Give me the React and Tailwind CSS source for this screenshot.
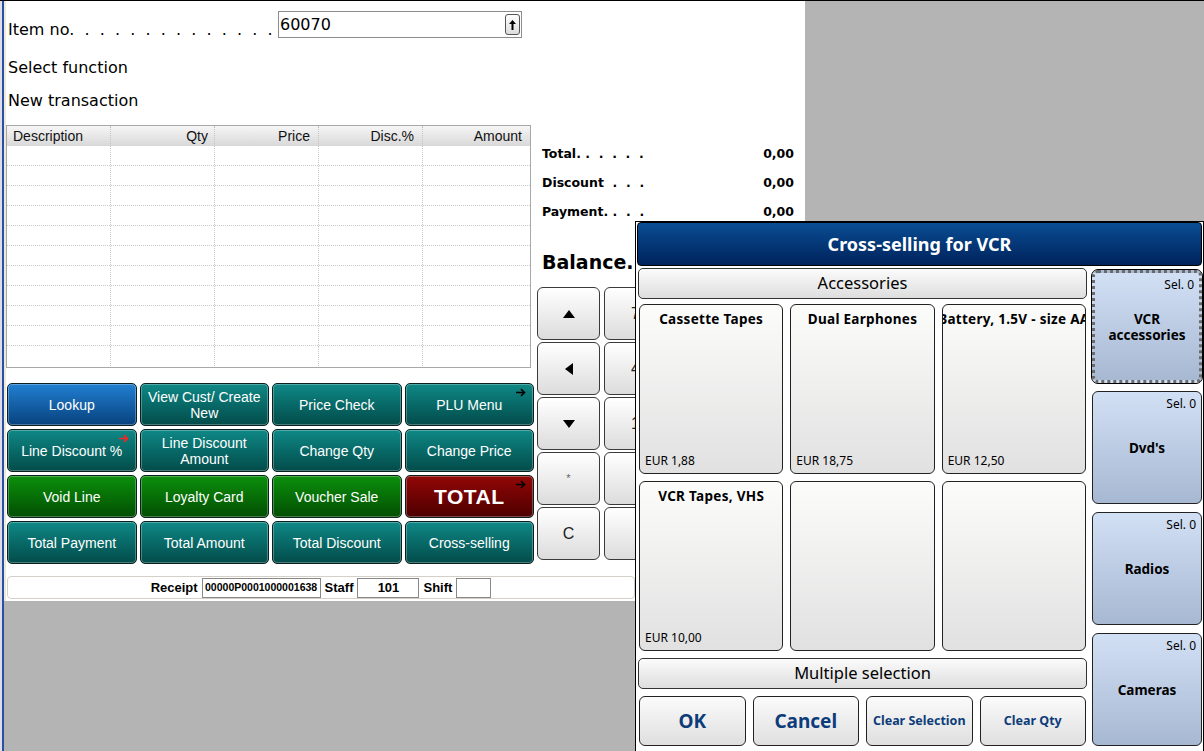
import React from "react";

const uiFont = { fontFamily: '"DejaVu Sans", Verdana, sans-serif' };
const arial = { fontFamily: '"Liberation Sans", Arial, sans-serif' };
const tahoma = { fontFamily: '"Noto Sans", Tahoma, sans-serif' };

const Arrow = ({ className }) => (
  <svg width="11" height="9" viewBox="0 0 11 9" className={className}>
    <path d="M0 4.5h8M5 1.2l3.5 3.3L5 7.8" stroke="currentColor" strokeWidth="1.6" fill="none" />
  </svg>
);

const fnColors = {
  blue: "from-[#2280d2] to-[#08427f]",
  teal: "from-[#0f8987] to-[#034c4a]",
  green: "from-[#0c900c] to-[#034f03]",
  red: "from-[#930808] to-[#4e0000]",
};

const FnButton = ({ label, color = "teal", arrow, big }) => (
  <div
    className={`relative flex items-center justify-center rounded-[5px] border border-[#0b1f1f] bg-linear-to-b ${fnColors[color]} px-1 text-center leading-[16px] text-white shadow-[inset_0_0_0_1px_rgba(255,255,255,0.28)]`}
    style={arial}
  >
    <span className={big ? "text-[21px] font-bold tracking-[0.5px]" : "text-[14px]"}>{label}</span>
    {arrow && (
      <Arrow className={`absolute top-[4px] right-[6px] ${arrow === "red" ? "text-[#ff2020]" : "text-black"}`} />
    )}
  </div>
);

const KeyButton = ({ children }) => (
  <div className="flex items-center justify-center rounded-[6px] border border-[#3a3a3a] bg-linear-to-b from-white to-[#dcdcdc] text-[16px] text-[#222]" style={arial}>
    {children}
  </div>
);

const Tri = ({ dir }) => {
  const d = {
    up: "M0 8L6 0l6 8z",
    down: "M0 0h12L6 8z",
    left: "M8 0v12L0 6z",
  }[dir];
  const w = dir === "left" ? 8 : 12;
  const h = dir === "left" ? 12 : 8;
  return (
    <svg width={w} height={h} viewBox={`0 0 ${w} ${h}`}>
      <path d={d} fill="#000" />
    </svg>
  );
};

const columns = [
  { label: "Description", align: "text-left pl-[6px]" },
  { label: "Qty", align: "text-right pr-[6px]" },
  { label: "Price", align: "text-right pr-[8px]" },
  { label: "Disc.%", align: "text-right pr-[8px]" },
  { label: "Amount", align: "text-right pr-[8px]" },
];

const fnButtons = [
  { label: "Lookup", color: "blue" },
  { label: "View Cust/ Create New" },
  { label: "Price Check" },
  { label: "PLU Menu", arrow: "black" },
  { label: "Line Discount %", arrow: "red" },
  { label: "Line Discount Amount" },
  { label: "Change Qty" },
  { label: "Change Price" },
  { label: "Void Line", color: "green" },
  { label: "Loyalty Card", color: "green" },
  { label: "Voucher Sale", color: "green" },
  { label: "TOTAL", color: "red", arrow: "black", big: true },
  { label: "Total Payment" },
  { label: "Total Amount" },
  { label: "Total Discount" },
  { label: "Cross-selling" },
];

// keypad; the right columns sit under the cross-selling dialog
const keys = [
  <Tri dir="up" />, "7", "", "",
  <Tri dir="left" />, "4", "", "",
  <Tri dir="down" />, "1", "", "",
  <span className="text-[11px] text-[#666]">*</span>, "", "", "",
  "C", "", "", "",
];

const products = [
  { name: "Cassette Tapes", price: "EUR 1,88" },
  { name: "Dual Earphones", price: "EUR 18,75" },
  { name: "Battery, 1.5V - size AA", price: "EUR 12,50" },
  { name: "VCR Tapes, VHS", price: "EUR 10,00" },
  { name: "", price: "" },
  { name: "", price: "" },
];

const categories = [
  { label: ["VCR", "accessories"], selected: true },
  { label: ["Dvd's"] },
  { label: ["Radios"] },
  { label: ["Cameras"] },
];

const TotalRow = ({ label, value }) => (
  <div className="flex h-[29px] items-center justify-between text-[12.5px] font-bold text-black" style={uiFont}>
    <span className="whitespace-pre">{label}</span>
    <span>{value}</span>
  </div>
);

const CrossSellDialog = () => (
  <div className="absolute top-[220px] left-[635px] flex h-[531px] w-[569px] flex-col border border-black bg-white" style={tahoma}>
    <div className="mx-[1px] flex h-[44px] items-center justify-center rounded-[4px] border border-black bg-linear-to-b from-[#0b4d94] to-[#01235c] text-[18px] font-bold text-white">
      Cross-selling for VCR
    </div>
    <div className="flex gap-[5px] pl-[2px]">
      <div className="flex w-[449px] flex-col">
        <div className="mt-[2px] flex h-[31px] items-center justify-center rounded-[5px] border border-[#333] bg-linear-to-b from-[#fbfbfb] to-[#dedede] text-[16.5px] text-black">
          Accessories
        </div>
        <div className="mt-[5px] grid grid-cols-3 grid-rows-[170px_170px] gap-[7px] px-[1px]">
          {products.map((p, i) => (
            <div
              key={i}
              className="flex flex-col justify-between overflow-hidden rounded-[6px] border border-[#222] bg-linear-to-b from-[#fcfcfb] to-[#e1e1e1] pt-[4px] pb-[3px] text-black"
            >
              <div className="flex h-[20px] justify-center whitespace-nowrap text-[13.5px] font-bold tracking-[0.3px]">
                {p.name}
              </div>
              <div className="pl-[5px] text-[12px]">{p.price}</div>
            </div>
          ))}
        </div>
        <div className="mt-[7px] flex h-[31px] items-center justify-center rounded-[5px] border border-[#333] bg-linear-to-b from-[#fbfbfb] to-[#dedede] text-[16.5px] text-black">
          Multiple selection
        </div>
        <div className="mt-[7px] grid h-[50px] grid-cols-4 gap-[7px] px-[1px]">
          {[
            { t: "OK", s: "text-[19px]" },
            { t: "Cancel", s: "text-[19px]" },
            { t: "Clear Selection", s: "text-[12.5px]" },
            { t: "Clear Qty", s: "text-[12.5px]" },
          ].map((b) => (
            <div
              key={b.t}
              className={`flex items-center justify-center whitespace-nowrap rounded-[6px] border border-[#222] bg-linear-to-b from-[#fbfbfb] to-[#dfdfdf] font-bold text-[#0d3c7a] ${b.s}`}
            >
              {b.t}
            </div>
          ))}
        </div>
      </div>
      <div className="mt-[4px] flex w-[110px] flex-col gap-[8px]">
        {categories.map((c, i) => (
          <div
            key={i}
            className={`relative flex h-[113px] flex-col items-center justify-center rounded-[6px] bg-linear-to-b from-[#d2e0f5] to-[#a7b8d2] text-[13.5px] font-bold leading-[16px] text-black ${
              c.selected ? "border-[3px] border-dotted border-[#6a6a6a] outline outline-1 outline-black" : "border border-[#222]"
            }`}
          >
            <span className="absolute top-[4px] right-[5px] text-[12px] font-normal">Sel. 0</span>
            {c.label.map((l) => (
              <span key={l}>{l}</span>
            ))}
          </div>
        ))}
      </div>
    </div>
  </div>
);

export default function App() {
  return (
    <div className="relative flex h-[751px] w-[1204px] overflow-hidden border-t border-black bg-[#b4b4b4]">
      <div className="w-[2px] bg-[#dcdde8]" />
      <div className="w-[2px] bg-[#2b4fa3]" />
      <div className="flex h-[600px] w-[801px] flex-col border-l-[2px] border-[#ece9d8] bg-white">
        {/* header */}
        <div className="h-[124px] pl-[2px] text-[16px] text-black" style={uiFont}>
          <div className="mt-[10px] flex h-[27px] items-center">
            <span className="w-[270px] overflow-hidden whitespace-pre pt-[10px]">Item no.  .  .  .  .  .  .  .  .  .  .  .  .  .</span>
            <div className="flex h-[27px] w-[244px] items-center justify-between border border-[#8c8c8c] pr-[1px] pl-[1px]">
              <span className="text-[16px]">60070</span>
              <div className="flex h-[21px] w-[15px] items-center justify-center rounded-[3px] border border-[#555] bg-linear-to-b from-white to-[#ddd]">
                <svg width="7" height="10" viewBox="0 0 7 10">
                  <path d="M3.5 0L7 4H4.5v6h-2V4H0z" fill="#000" />
                </svg>
              </div>
            </div>
          </div>
          <div className="mt-[17px] flex h-[26px] items-center">Select function</div>
          <div className="mt-[7px] flex h-[26px] items-center">New transaction</div>
        </div>

        {/* body */}
        <div className="flex">
          <div className="flex w-[531px] flex-col">
            <div className="h-[243px] w-[525px] border border-[#a8a8a8]" style={arial}>
              <div className="grid h-[20px] grid-cols-[104px_104px_104px_104px_1fr] bg-linear-to-b from-[#f6f6f6] to-[#d8d8d8] text-[14px] leading-[20px] text-[#111]">
                {columns.map((c, i) => (
                  <div key={c.label} className={`${c.align} ${i < 4 ? "border-r border-dotted border-[#c4c4c4]" : ""}`}>
                    {c.label}
                  </div>
                ))}
              </div>
              {Array.from({ length: 11 }).map((_, r) => (
                <div
                  key={r}
                  className={`grid h-[20px] grid-cols-[104px_104px_104px_104px_1fr] ${r < 10 ? "border-b border-dotted border-[#c8c8c8]" : ""}`}
                >
                  {columns.map((c, i) => (
                    <div key={c.label} className={i < 4 ? "border-r border-dotted border-[#c8c8c8]" : ""} />
                  ))}
                </div>
              ))}
            </div>
            <div className="mt-[15px] ml-[1px] grid w-[527px] grid-cols-4 grid-rows-[43px_43px_43px_43px] gap-[3px]">
              {fnButtons.map((b) => (
                <FnButton key={b.label} {...b} />
              ))}
            </div>
          </div>

          <div className="flex flex-1 flex-col">
            <div className="pt-[15px] pr-[11px] pl-[5px]">
              <TotalRow label="Total. .  .  .  .  ." value="0,00" />
              <TotalRow label="Discount  .  .  ." value="0,00" />
              <TotalRow label="Payment. .  .  ." value="0,00" />
              <div className="mt-[20px] flex h-[30px] items-center text-[19px] font-bold" style={uiFont}>
                Balance.
              </div>
            </div>
            <div className="mt-[10px] grid w-[264px] grid-cols-4 grid-rows-[53px_53px_53px_53px_53px] gap-x-[4px] gap-y-[2px]">
              {keys.map((k, i) => (
                <KeyButton key={i}>{k}</KeyButton>
              ))}
            </div>
          </div>
        </div>

        {/* status bar */}
        <div className="mt-[12px] ml-[1px] flex h-[23px] w-[628px] items-center justify-center gap-[4px] rounded-[4px] border border-[#d4d0c8] text-[13px] font-bold text-black" style={arial}>
          <span>Receipt</span>
          <span className="flex h-[20px] w-[119px] items-center justify-center border border-[#888] text-[10.5px]">00000P0001000001638</span>
          <span>Staff</span>
          <span className="flex h-[20px] w-[62px] items-center justify-center border border-[#888]">101</span>
          <span>Shift</span>
          <span className="h-[20px] w-[35px] border border-[#888]" />
        </div>
      </div>

      <CrossSellDialog />
    </div>
  );
}
